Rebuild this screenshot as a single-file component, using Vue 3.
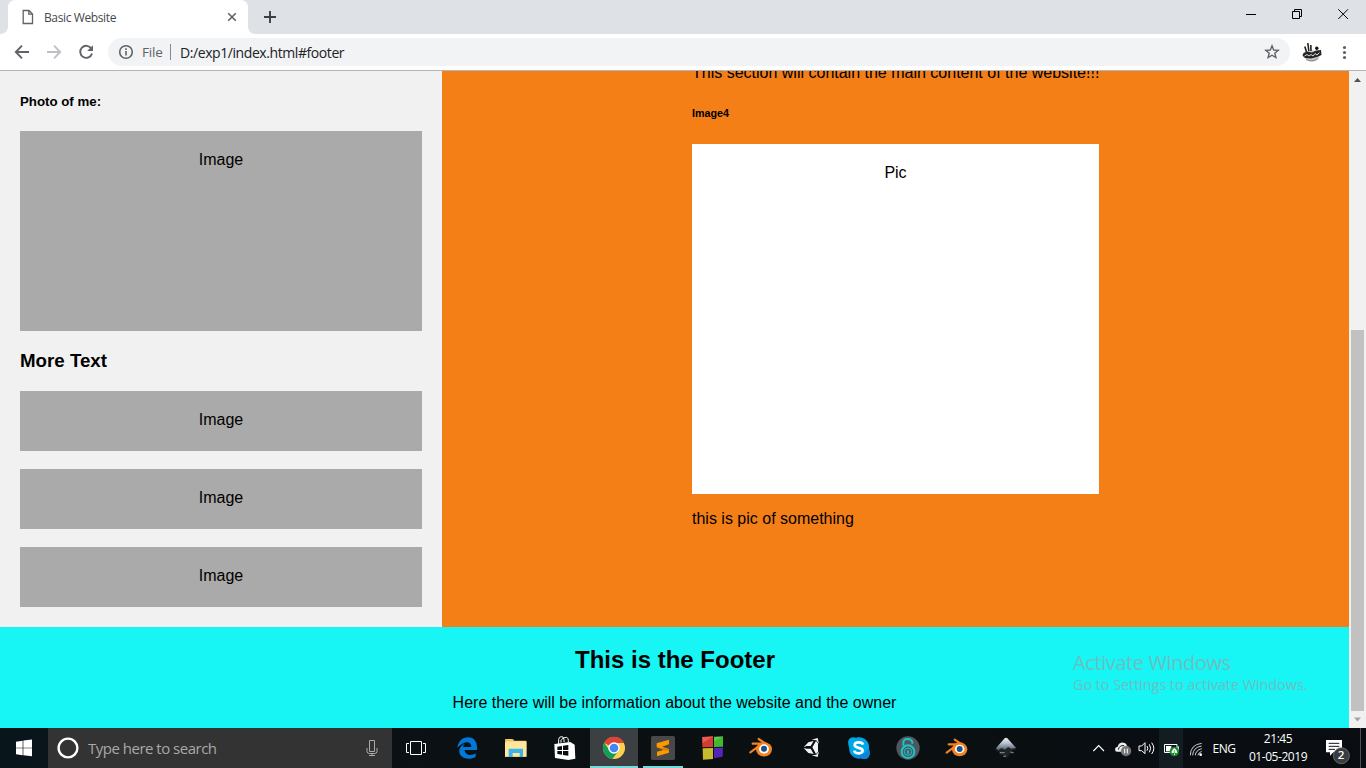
<script setup>
const blocks = [1, 2, 3]
</script>

<template>
  <div class="screen">
    <header class="tabstrip">
      <svg class="tabshape" width="264" height="34" viewBox="0 0 264 34"><path d="M0 34C5 34 8 31 8 26V8Q8 0 16 0H240Q248 0 248 8V26C248 31 251 34 256 34Z" fill="#fff" /></svg>
      <div class="tab">
        <svg width="12" height="16" viewBox="0 0 12 16" fill="none" stroke="#5f6368" stroke-width="1.3"><path d="M1.2 1.5H7L10.5 5V14.5H1.2ZM6.8 1.5V5.2H10.5" /></svg>
        <span class="tabtitle">Basic Website</span>
        <svg class="tabclose" width="10" height="10" viewBox="0 0 10 10" stroke="#5f6368" stroke-width="1.6"><path d="M1.2 1.2L8.8 8.8M8.8 1.2L1.2 8.8" /></svg>
      </div>
      <svg class="plus" width="14" height="14" viewBox="0 0 14 14" stroke="#3c4043" stroke-width="1.9"><path d="M7 1V13M1 7H13" /></svg>
      <svg class="winctl" width="120" height="30" viewBox="0 0 120 30" fill="none" stroke="#000"><path d="M0 14.5H10M46.500 11.5H53.5V18.5H46.5ZM48.500 11V9.500H55.500V16.500H54M92.300 9.300L102 19M102 9.300L92.300 19" /></svg>
    </header>

    <div class="toolbar">
      <svg class="navicons" width="108" height="36" viewBox="0 0 108 36" fill="none" stroke="#5f6368" stroke-width="1.9">
        <path d="M29 18H16M22 11.7L15.8 18L22 24.3" />
        <path d="M47 18H60M54 11.7L60.2 18L54 24.3" stroke="#bdc1c6" />
        <path d="M91.3 14.6A6 6 0 1 0 92 19.5" /><path d="M93 11.2V17H87.2Z" fill="#5f6368" stroke="none" />
      </svg>
      <div class="omnibox">
        <svg width="16" height="16" viewBox="0 0 16 16" fill="none" stroke="#5f6368" stroke-width="1.6"><circle cx="8" cy="8" r="6.3" /><path d="M8 7V11.6M8 4.2V5.9" /></svg>
        <span class="file">File</span><i class="divider"></i><span class="url">D:/exp1/index.html#footer</span>
        <svg class="star" width="16" height="16" viewBox="0 0 16 16" fill="none" stroke="#5f6368" stroke-width="1.4"><path d="M8 1.8L9.7 6L14.2 6.3L10.8 9.2L11.9 13.6L8 11.2L4.1 13.6L5.2 9.2L1.8 6.3L6.3 6Z" /></svg>
      </div>
      <svg class="avatar" width="66" height="36" viewBox="1300 34 66 36">
        <ellipse cx="1312" cy="56" rx="7.500" ry="5.800" fill="#c9c9c9" />
        <path d="M1303.500 53L1307 51.500L1312 52.500L1316 50.500L1321 50L1321.500 55L1317 57L1311 58.500L1305 58L1302.500 55.500Z" fill="#222" />
        <path d="M1306.500 52L1304.800 46.500M1308.800 51L1307.800 43M1311 51L1310.800 45" stroke="#222" stroke-width="1.6" />
        <circle cx="1316.800" cy="48.300" r="1.700" fill="#111" />
        <path d="M1304.500 56L1307 54.500L1309 56L1311 54.500L1313 56L1315 53.500L1317 55L1319.500 52.500" stroke="#ddd" fill="none" />
        <path d="M1306 59.500Q1312 62.500 1318 58.500" stroke="#888" fill="none" />
        <g fill="#5f6368"><circle cx="1344.5" cy="47.5" r="1.6" /><circle cx="1344.5" cy="52.5" r="1.6" /><circle cx="1344.5" cy="57.5" r="1.6" /></g>
      </svg>
    </div>

    <div class="viewport">
      <div class="page">
        <div class="row">
          <aside class="side">
            <h5>Photo of me:</h5>
            <div class="fakeimg tall">Image</div>
            <h3>More Text</h3>
            <div v-for="b in blocks" :key="b" class="fakeimg">Image</div>
          </aside>
          <main class="main">
            <div class="content">
              <p class="intro">This section will contain the main content of the website!!!</p>
              <h6>Image4</h6>
              <div class="pic">Pic</div>
              <p class="caption">this is pic of something</p>
            </div>
          </main>
        </div>
        <footer class="footer">
          <h2>This is the Footer</h2>
          <p>Here there will be information about the website and the owner</p>
          <div class="watermark"><div class="wm1">Activate Windows</div><div class="wm2">Go to Settings to activate Windows.</div></div>
        </footer>
      </div>
      <div class="scrollbar">
        <svg width="17" height="17" viewBox="0 0 17 17"><path d="M5 11L8.5 7L12 11Z" fill="#505050" /></svg>
        <div class="thumb"></div>
        <svg width="17" height="17" viewBox="0 0 17 17"><path d="M5 6.5L8.5 10.5L12 6.5Z" fill="#a3a3a3" /></svg>
      </div>
    </div>

    <div class="taskbar">
      <div class="start"><svg width="48" height="40" viewBox="0 9 144 120"><path d="M48 50L68 47V68H48ZM70 46.5L96 43.5V68H70ZM48 70H68V91L48 88ZM70 70H96V94L70 91Z" fill="#fff" /></svg></div>
      <div class="search">
        <svg width="24" height="24" viewBox="0 0 24 24" fill="none"><circle cx="12" cy="12" r="9.4" stroke="#fff" stroke-width="2.4" /></svg>
        <span class="hint">Type here to search</span>
        <svg class="mic" width="14" height="18" viewBox="0 0 14 18" fill="none" stroke="#aaa"><path d="M4.500 1.500H9.500V12.500H4.500ZM2 9V12.500Q2 14.500 4.500 14.500H9.500Q12 14.500 12 12.500V9M7 14.500V17M4 16.500H10" /></svg>
      </div>
      <svg class="taskview" width="50" height="40" viewBox="-9 9 150 120" fill="none" stroke="#fff" stroke-width="3"><path d="M46.5 49.5H79.5V88.5H46.5ZM42 55.5H34.5V82.5H42M84 55.5H91.5V82.5H84" /></svg>
      <div class="apps">
        <div class="app"><svg viewBox="141 9 147 120"><path d="M187 68C190 48 202 37 219 37C238 37 246 52 246 67V75H209C210 91 229 94 242 85V96C221 107 196 100 193 82C191 70 200 60 210 56C204 60 204 64 205 66H229C229 45 205 48 187 68Z" fill="#0078d7" /></svg></div>
        <div class="app"><svg viewBox="288 9 147 120"><path d="M330 42H354L358 47H393V95H330Z" fill="#e9b84b" /><path d="M333 49H395V95H330V53Z" fill="#ffe69c" /><path d="M336 43H351V46H336Z" fill="#f9da73" /><path d="M341 71H384V96H374V84H353V96H341Z" fill="#39b5eb" /></svg></div>
        <div class="app"><svg viewBox="435 9 147 120"><path d="M478 57L526 51L539 59L541 101L520 105L480 99Z" fill="#fff" /><path d="M491 58V43Q492 35 499 35Q505 33 507 44V51M498 53V46Q503 37 514 37Q521 38 520 52" fill="none" stroke="#fff" stroke-width="3" /><path d="M487 65L501 63V75H487ZM504 62L520 60V75H504ZM487 78H501V89L487 87ZM504 78H520V92L504 90Z" fill="#080d10" /></svg></div>
        <div class="app active"><svg viewBox="582 9 147 120"><circle cx="657" cy="69" r="33" fill="#ffd04f" /><path d="M657 69L628 53A33 33 0 0 1 687 54H657Z" fill="#dc4437" /><path d="M628 53A33 33 0 0 0 652 102L671 77L643 76Z" fill="#129d58" /><path d="M657 69L628 53Q634 43 646 38L660 54Z" fill="#dc4437" /><circle cx="657" cy="69" r="17" fill="#fff" /><circle cx="657" cy="69" r="13" fill="#4285f4" /></svg></div>
        <div class="app running"><svg viewBox="729 9 147 120"><rect x="768" y="33" width="72" height="72" rx="5" fill="#484848" /><path d="M785 55L822 44V58L801 65L822 72V83L786 94V80L807 74L785 67Z" fill="#ff9800" /><path d="M785 67L822 72V77L807 76Z" fill="#d88100" /></svg></div>
        <div class="app"><svg viewBox="-9 9 147 120"><path d="M36 36L69 33V66L37 67Z" fill="#d63a31" /><path d="M72 35L99 34V65L72 66Z" fill="#41b82d" /><path d="M38 70L69 69V102L39 104Z" fill="#c5bd2c" /><path d="M72 68H99L98 95L72 100Z" fill="#5524b8" /><path d="M37 37L68 35L38 54ZM73 36L97 35L73 49Z" fill="#fff" opacity=".2" /></svg></div>
        <div class="app"><svg viewBox="138 9 147 120"><path d="M188 56H222M206 42L238 63M181 82L211 60" fill="none" stroke="#f58220" stroke-width="6.500" stroke-linecap="round" /><ellipse cx="222" cy="73" rx="24" ry="21.500" fill="#f58220" /><ellipse cx="222" cy="72" rx="15" ry="14" fill="#fff" /><circle cx="222" cy="71" r="9" fill="#17508b" /></svg></div>
        <div class="app"><svg viewBox="285 9 147 120"><path d="M341 67L355 52L371 48L362 63H350ZM341 69L350 71H362L371 87L355 84ZM367 67L378 48L384 55V80L378 87ZM365 44L383 39L387 56L379 46ZM365 91L383 96L387 79L379 89Z" fill="#f3f3f3" /></svg></div>
        <div class="app"><svg viewBox="432 9 147 120"><path d="M477 43Q482 34 499 38C522 33 540 50 537 72Q542 84 537 95Q529 105 513 100C491 103 476 87 478 69Q471 53 477 43Z" fill="#00a7e8" /><path d="M537 72Q542 84 537 95Q529 105 513 100C497 102 488 95 482 86Q510 101 537 72Z" fill="#0b85d8" /><path d="M519 59Q517 52 506 52Q494 52 494 60C494 72 518 65 518 77Q517 85 506 85Q494 85 493 77" fill="none" stroke="#fff" stroke-width="8" /></svg></div>
        <div class="app"><svg viewBox="579 9 147 120"><circle cx="654" cy="69" r="35" fill="#50565f" /><g fill="none" stroke="#16c7c9"><path d="M640 62V51Q641 42 653 42Q664 42 667 51V56" stroke-width="6" /><circle cx="654" cy="80" r="19" stroke-width="6" /><circle cx="654" cy="80" r="11" stroke-width="3" /><path d="M654 76V86" stroke-width="5" /></g></svg></div>
        <div class="app"><svg viewBox="726 7 147 120"><path d="M776 56H809M794 42L824 62M770 81L798 60" fill="none" stroke="#f58220" stroke-width="6.500" stroke-linecap="round" /><ellipse cx="809" cy="71" rx="23" ry="21" fill="#f58220" /><ellipse cx="809" cy="70" rx="14.500" ry="13" fill="#fff" /><circle cx="809" cy="70" r="9" fill="#17508b" /></svg></div>
        <div class="app"><svg viewBox="873 9 147 120">
          <defs><linearGradient id="ink" x2="0" y2="1"><stop stop-color="#eee" /><stop offset=".45" stop-color="#b7c1cd" /><stop offset="1" stop-color="#46576b" /></linearGradient></defs>
          <path d="M917 70L943 40Q948 35 953 40L979 68Q979 75 966 77Q958 80 970 84Q962 91 957 86Q958 97 945 99L941 91L927 89Q936 82 921 78Q915 76 917 70Z" fill="#202327" /><path d="M918 70L944 40Q948 36 952 40L978 69L964 71L954 66L945 74L935 69L925 76Z" fill="url(#ink)" /><path d="M929 83H944M948 93L940 94M961 81L971 83" stroke="#8b9299" stroke-width="3" /></svg></div>
      </div>
      <div class="tray">
        <svg width="134" height="40" viewBox="33 9 402 120" fill="none">
          <rect x="267" y="9" width="72" height="120" fill="#131c21" />
          <path d="M70 78L86 62L102 78" stroke="#fff" stroke-width="3.500" />
          <path d="M136 77Q133 67 143 65Q147 51 161 53Q171 55 171 65Q181 68 179 80H145Q137 81 136 77Z" fill="#eee" /><path d="M145 74Q148 60 162 62" stroke="#10181d" stroke-width="3" /><circle cx="168" cy="78" r="15" fill="#777" stroke="#999" /><path d="M164 71V85M172 71V85" stroke="#fff" stroke-width="3" />
          <path d="M207 63H215L225 53V86L215 77H207ZM231 63Q236 70 231 77M238 58Q246 70 238 82M245 53Q258 70 245 87" stroke="#fff" stroke-width="3" />
          <path d="M283.500 58.500H321V82.500H283.500ZM325 64V76" stroke="#fff" stroke-width="3" /><path d="M288 63H304V79H288Z" fill="#fff" /><circle cx="313" cy="80" r="14" fill="#168b29" /><path d="M313 69Q301 80 306 85L312 83V90H315V83L321 85Q324 78 313 69Z" fill="#fff" /><path d="M313 75V88" stroke="#168b29" stroke-width="2" />
          <path d="M361 91Q361 59 395 55M368 91Q369 67 395 63M376 91Q377 76 395 71M384 91Q385 83 395 79" stroke="#ccc" stroke-width="3" /><circle cx="392" cy="89" r="4" fill="#fff" />
        </svg>
        <span class="lang">ENG</span>
        <div class="clock"><span class="time">21:45</span><span>01-05-2019</span></div>
        <div class="action">
          <svg width="42" height="40" viewBox="741 9 126 120"><path d="M765 45H813V82H787L777 92V82H765Z" fill="#fff" /><path d="M773 55H805M773 64H805M773 73H792" stroke="#10171b" stroke-width="3" /><circle cx="811" cy="92" r="24" fill="#393d40" stroke="#888" stroke-width="2" /></svg>
          <b class="count">2</b>
        </div>
      </div>
    </div>
  </div>
</template>

<style>
body { margin: 0; overflow: hidden; }
</style>

<style scoped>
* { box-sizing: border-box; }
.screen { width: 1366px; height: 768px; display: flex; flex-direction: column; overflow: hidden; font-family: "Open Sans", "Noto Sans", sans-serif; }
svg { display: block; flex: none; }
h2, h3, h5, h6, p { margin: 0; }
.tabstrip { height: 34px; background: #dee1e6; display: flex; position: relative; flex: none; }
.tabshape { position: absolute; left: 0; top: 0; }
.tab { position: relative; width: 248px; height: 34px; display: flex; align-items: center; padding: 0 11px 0 22px; }
.tabtitle { margin-left: 10px; font-size: 12px; letter-spacing: -0.38px; color: #45494d; white-space: nowrap; }
.tabclose { margin-left: auto; }
.plus { margin: 10px 0 0 15px; }
.winctl { margin-left: auto; }
.toolbar { height: 36px; background: #fff; display: flex; align-items: center; flex: none; }
.omnibox { width: 1182px; height: 28px; border-radius: 14px; background: #f1f3f4; display: flex; align-items: center; padding: 0 10px; white-space: nowrap; font-size: 14px; }
.file { width: 22px; margin-left: 8px; color: #5f6368; font-size: 13.5px; letter-spacing: -0.2px; }
.divider { width: 1px; height: 16px; margin: 0 9px 0 6px; background: #85898d; }
.url { color: #202124; font-size: 14px; letter-spacing: -0.42px; }
.star { margin-left: auto; }
.avatar { margin-left: 10px; }
.viewport { height: 658px; border-top: 1px solid #b6b4b6; display: flex; flex: none; font-family: "Liberation Sans", Arial, sans-serif; color: #000; }
.page { width: 1349px; height: 657px; overflow: hidden; }
.row { height: 556px; display: flex; }
.side { width: 442px; background: #f1f1f1; padding: 23px 20px 0; }
h5 { font-size: 13.28px; line-height: 15px; margin-bottom: 22px; }
h3 { font-size: 18.72px; line-height: 22px; margin: 19px 0 19px; }
.fakeimg { height: 60px; padding: 20px; background: #aaa; text-align: center; font-size: 16px; line-height: 18px; margin-bottom: 18px; }
.tall { height: 200px; }
.main { flex: 1; background: #f57f17; display: flex; justify-content: center; }
.content { width: 407px; font-size: 16px; line-height: 18px; }
.intro { margin-top: -7px; white-space: nowrap; }
h6 { font-size: 10.72px; line-height: 12px; margin: 25px 0; }
.pic { height: 350px; background: #fff; padding: 20px; text-align: center; }
.caption { margin-top: 16px; }
.footer { height: 101px; background: #18f5f5; position: relative; text-align: center; padding-top: 19px; font-size: 16px; }
h2 { font-size: 24px; line-height: 28px; margin-bottom: 20px; padding-left: 1px; }
.footer p { line-height: 18px; }
.watermark { position: absolute; left: 1073px; top: 22px; text-align: left; white-space: nowrap; color: #6cbfc1; font-family: "Open Sans", sans-serif; }
.wm1 { font-size: 20px; line-height: 27px; letter-spacing: -0.4px; }
.wm2 { font-size: 14.5px; line-height: 18px; letter-spacing: -0.09px; }
.scrollbar { width: 17px; background: #f1f1f1; display: flex; flex-direction: column; }
.thumb { width: 13px; height: 381px; margin: auto 2px 0; background: #c1c1c1; }
.taskbar { height: 40px; flex: none; display: flex; background: linear-gradient(90deg, #08151b, #0b1013 35%, #0a0f12 70%, #090d12); color: #fff; }
.start { width: 48px; }
.search { width: 344px; background: #333; display: flex; align-items: center; padding: 0 13px 0 8px; }
.hint { color: #a9a9a9; font-size: 15px; margin-left: 8px; letter-spacing: -0.5px; white-space: nowrap; }
.mic { margin-left: auto; }
.apps { display: flex; }
.app { width: 49px; height: 40px; position: relative; }
.app svg { width: 49px; height: 40px; position: relative; }
.active { background: linear-gradient(90deg, transparent 1px, #3c4042 1px); }
.active::after, .running::after { content: ""; position: absolute; left: 1px; right: 0; bottom: 0; height: 2px; background: #76d9dc; }
.running::after { left: 5px; right: 4px; }
.tray { margin-left: auto; display: flex; width: 285px; align-items: center; }
.lang { width: 28px; margin-left: -5px; font-size: 12px; letter-spacing: -0.5px; text-align: center; }
.clock { width: 74px; margin-left: 3px; display: flex; flex-direction: column; align-items: center; font-size: 12px; line-height: 18px; letter-spacing: -0.45px; white-space: nowrap; }
.action { position: relative; width: 43px; height: 40px; margin-left: 3px; border-right: 1px solid #4b5154; }
.count { position: absolute; left: 15px; top: 18px; width: 16px; text-align: center; font-size: 11.5px; line-height: 17px; font-weight: 600; }
</style>
